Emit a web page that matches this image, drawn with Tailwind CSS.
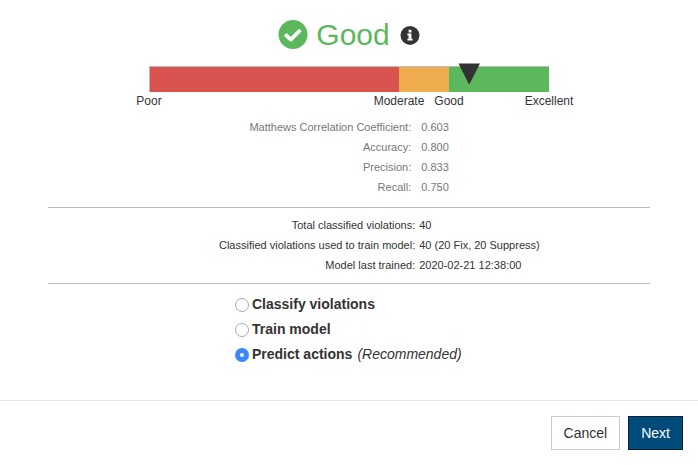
<!DOCTYPE html>
<html lang="en">
<head>
    <meta charset="UTF-8">
    <meta name="viewport" content="width=device-width, initial-scale=1.0">
    <title>Model Quality</title>
    <!-- Tailwind CSS CDN -->
    <script src="https://cdn.jsdelivr.net/npm/@tailwindcss/browser@4"></script>
</head>
<body class="bg-white text-[#333] font-['Liberation_Sans',Arial,sans-serif] text-sm">

    <main class="px-12 pt-[17px] pb-[33px]">
        <!-- Overall rating -->
        <header class="flex items-center justify-center gap-2 h-9">
            <svg class="size-[30px]" viewBox="0 0 30 30" aria-hidden="true">
                <circle cx="15" cy="14.6" r="14.5" fill="#5cb85c"/>
                <path d="M7.2 14.4L12.8 19.6L22.4 10" fill="none" stroke="#fff" stroke-width="3.8" stroke-linejoin="round"/>
            </svg>
            <h1 class="text-[30px] leading-9 text-[#5cb85c]">Good</h1>
            <button type="button" aria-label="About this rating" class="ml-[2px]">
                <svg class="size-5" viewBox="0 0 20 20" aria-hidden="true">
                    <circle cx="10" cy="10.4" r="9.5" fill="#333"/>
                    <path d="M8.6 4.8h2.8v2.6H8.6zM7.4 8.6h4v5.2h1.2v1.8H7.4v-1.8h1.2v-3.4H7.4z" fill="#fff"/>
                </svg>
            </button>
        </header>

        <!-- Rating scale -->
        <section class="relative w-2/3 max-w-[400px] mx-auto mt-[13px]">
            <div class="flex h-[26px] border-t border-l border-[#bbb]">
                <div class="w-5/8 bg-[#d9534f]"></div>
                <div class="w-1/8 bg-[#f0ad4e]"></div>
                <div class="w-1/4 bg-[#5cb85c]"></div>
            </div>
            <svg class="absolute left-[80%] -top-[3px] w-[22px] h-[22px] -translate-x-1/2" viewBox="0 0 22 22" aria-hidden="true">
                <path d="M0.5 0.5H22L11.2 21.8z" fill="#333"/>
            </svg>
            <div class="relative h-[18px] text-xs leading-[18px]">
                <span class="absolute left-0 -translate-x-1/2">Poor</span>
                <span class="absolute left-[62.5%] -translate-x-1/2">Moderate</span>
                <span class="absolute left-3/4 -translate-x-1/2">Good</span>
                <span class="absolute left-full -translate-x-1/2">Excellent</span>
            </div>
        </section>

        <!-- Model metrics -->
        <table class="w-full mt-[7px] text-[11px] leading-5 text-[#777]">
            <tbody>
                <tr>
                    <th scope="row" class="w-[61%] pr-1 text-right font-normal">Matthews Correlation Coefficient:</th>
                    <td class="pl-[6px]">0.603</td>
                </tr>
                <tr>
                    <th scope="row" class="pr-1 text-right font-normal">Accuracy:</th>
                    <td class="pl-[6px]">0.800</td>
                </tr>
                <tr>
                    <th scope="row" class="pr-1 text-right font-normal">Precision:</th>
                    <td class="pl-[6px]">0.833</td>
                </tr>
                <tr>
                    <th scope="row" class="pr-1 text-right font-normal">Recall:</th>
                    <td class="pl-[6px]">0.750</td>
                </tr>
            </tbody>
        </table>

        <!-- Training summary -->
        <div class="mt-[10px] pt-[7px] pb-2 border-y border-[#bbb]">
            <table class="w-full text-[11px] leading-5">
                <tbody>
                    <tr>
                        <th scope="row" class="w-[61%] text-right font-normal">Total classified violations:</th>
                        <td class="pl-1">40</td>
                    </tr>
                    <tr>
                        <th scope="row" class="text-right font-normal">Classified violations used to train model:</th>
                        <td class="pl-1">40 (20 Fix, 20 Suppress)</td>
                    </tr>
                    <tr>
                        <th scope="row" class="text-right font-normal">Model last trained:</th>
                        <td class="pl-1">2020-02-21 12:38:00</td>
                    </tr>
                </tbody>
            </table>
        </div>

        <!-- Next step -->
        <form id="step-form" class="w-[228px] mx-auto mt-2 leading-[25px] whitespace-nowrap">
            <label class="flex items-center font-bold">
                <input type="radio" name="step" class="appearance-none size-[14px] mr-[3px] rounded-full border border-[#aaa] bg-white checked:border-[5px] checked:border-[#3b88fd]">
                Classify violations
            </label>
            <label class="flex items-center font-bold">
                <input type="radio" name="step" class="appearance-none size-[14px] mr-[3px] rounded-full border border-[#aaa] bg-white checked:border-[5px] checked:border-[#3b88fd]">
                Train model
            </label>
            <label class="flex items-center font-bold">
                <input type="radio" name="step" checked class="appearance-none size-[14px] mr-[3px] rounded-full border border-[#aaa] bg-white checked:border-[5px] checked:border-[#3b88fd]">
                Predict actions
                <em class="ml-[5px] font-normal">(Recommended)</em>
            </label>
        </form>
    </main>

    <!-- Dialog buttons -->
    <footer class="flex justify-end gap-2 p-[15px] border-t border-[#e5e5e5]">
        <button type="button" class="px-3 py-[6px] leading-5 border border-[#ccc] bg-white">Cancel</button>
        <button type="submit" form="step-form" class="px-3 py-[6px] leading-5 border border-[#00233a] bg-[#004b7a] text-white">Next</button>
    </footer>

</body>
</html>
